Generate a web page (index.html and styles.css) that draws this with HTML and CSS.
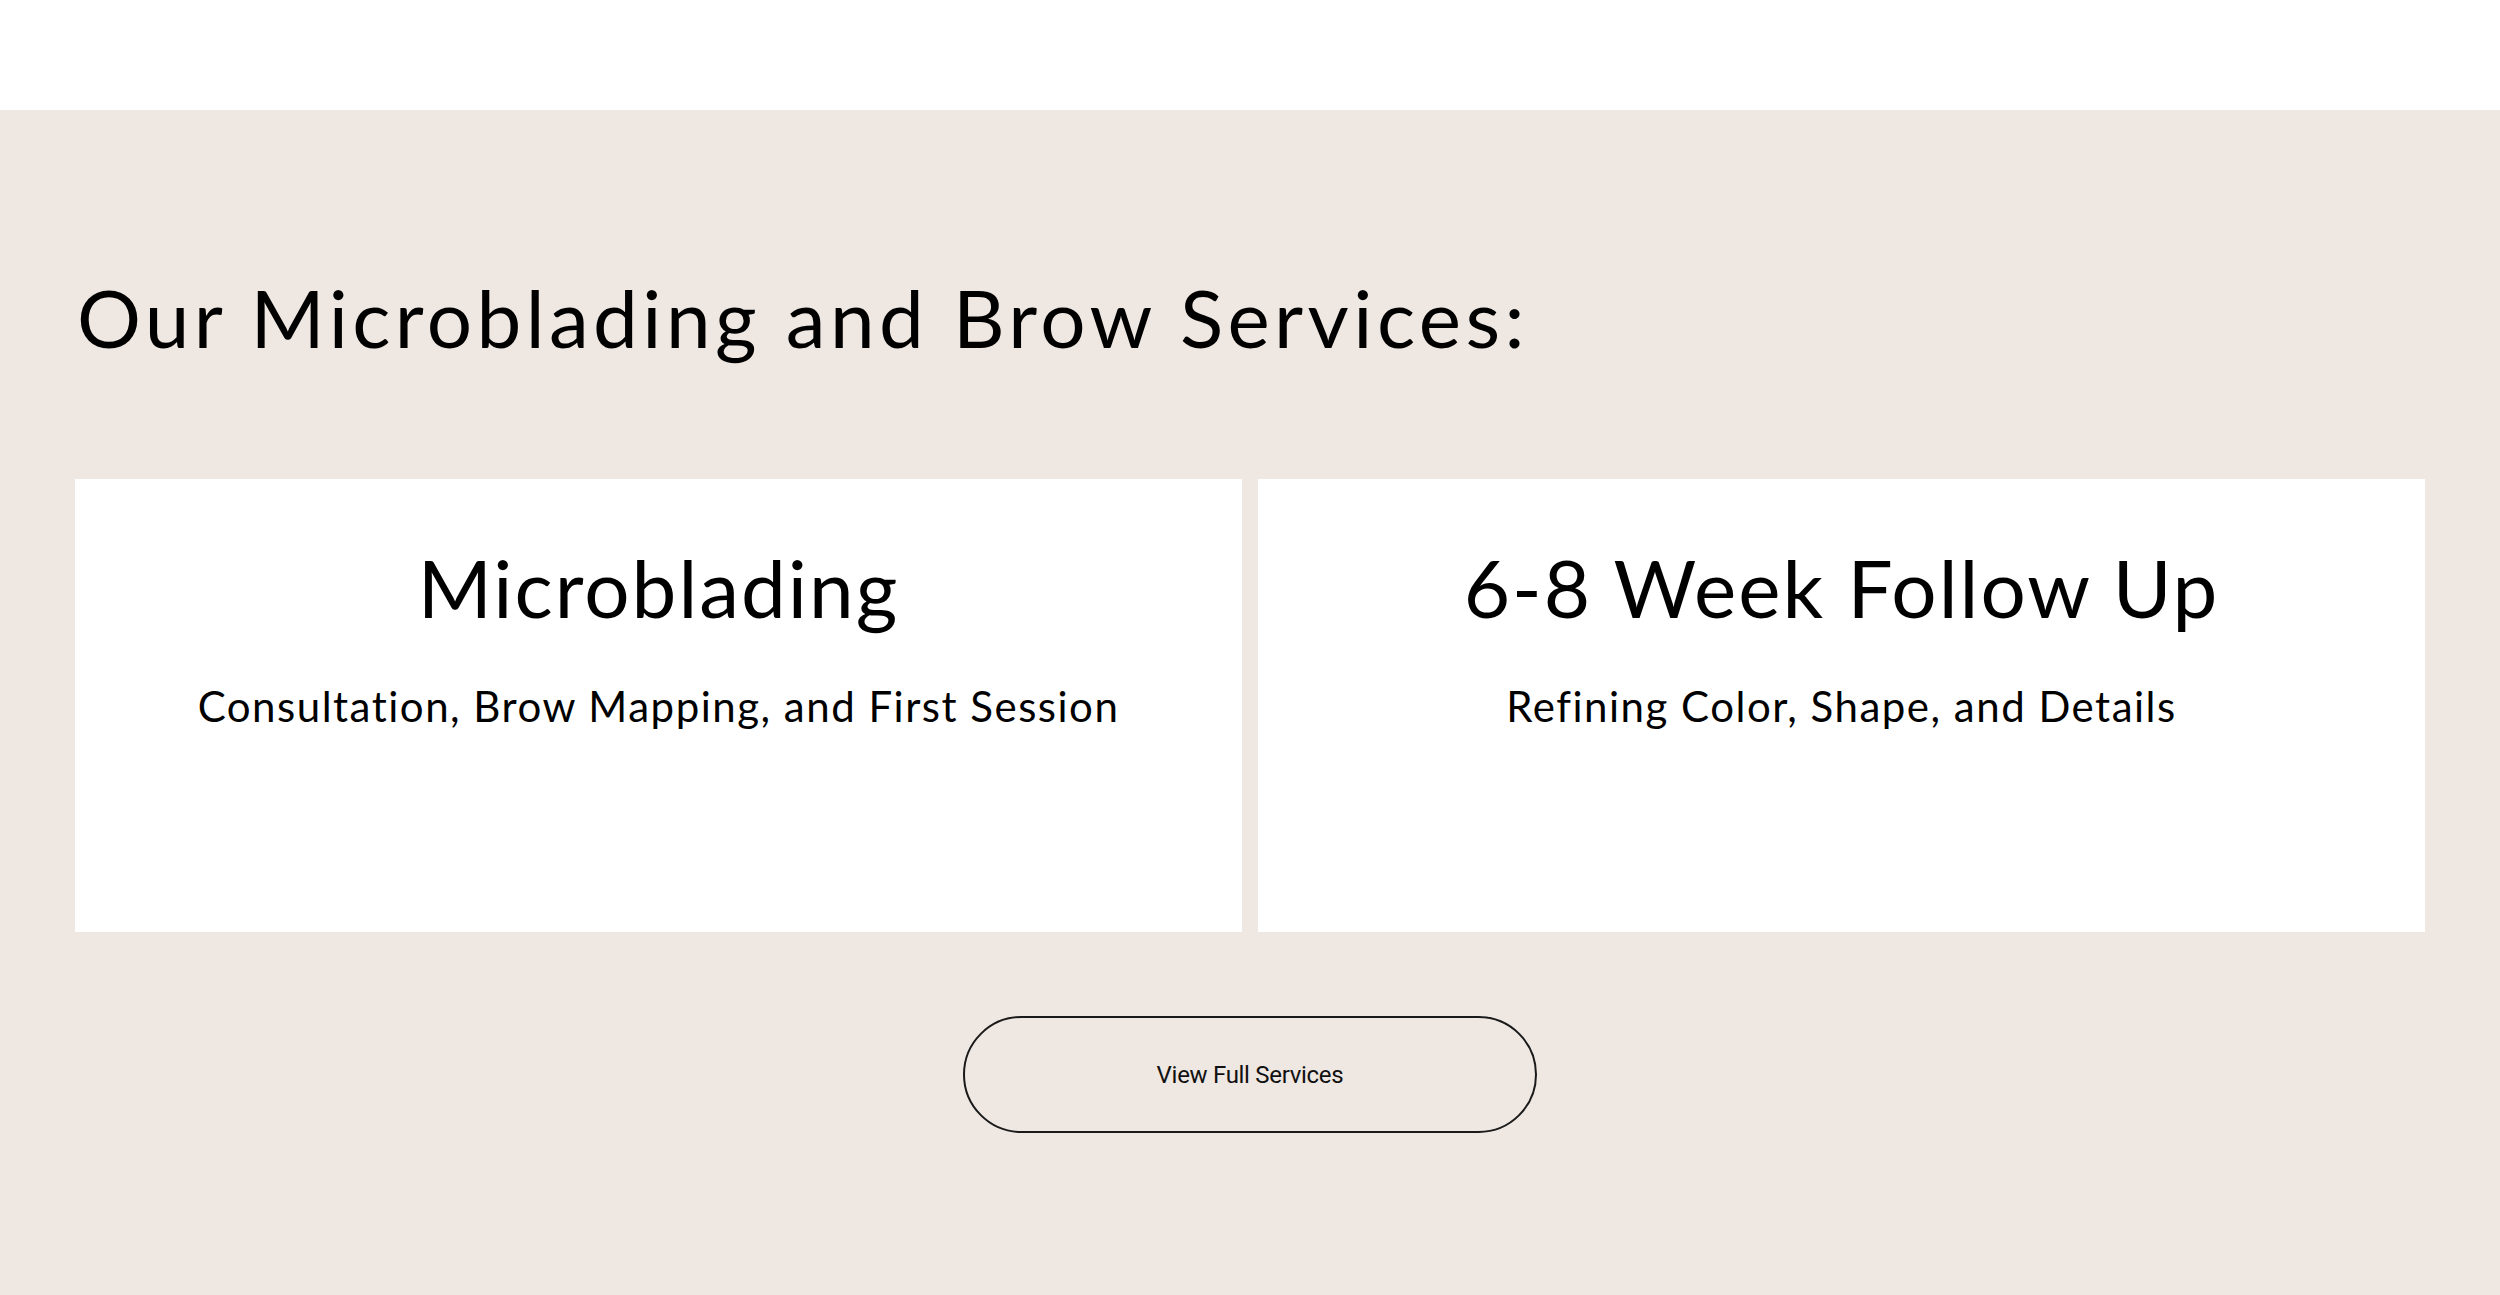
FILE: index.html
```html
<!DOCTYPE html>
<html lang="en">
<head>
    <meta charset="UTF-8">
    <meta name="viewport" content="width=device-width, initial-scale=1.0">
    <title>Microblading and Brow Services</title>
    <link rel="stylesheet" href="styles.css">
</head>
<body>
    <header class="top-bar"></header>

    <section class="services">
        <h2 class="services-title">Our Microblading and Brow Services:</h2>

        <div class="service-grid">
            <div class="service-card">
                <h3>Microblading</h3>
                <p>Consultation, Brow Mapping, and First Session</p>
            </div>
            <div class="service-card">
                <h3>6-8 Week Follow Up</h3>
                <p>Refining Color, Shape, and Details</p>
            </div>
        </div>

        <div class="actions">
            <a class="outline-btn" href="#">View Full Services</a>
        </div>
    </section>
</body>
</html>
```

FILE: styles.css
```css
body {
    margin: 0;
    padding: 0;
    font-family: 'Lato', 'Open Sans', sans-serif;
    color: #000;
    background: #eee7e2;
}
.top-bar {
    height: 110px;
    background: #fff;
}
.services {
    background: #eee7e2;
    padding: 167px 75px 162px;
}
.services-title {
    margin: 0 0 122px 2px;
    font-size: 80px;
    font-weight: 400;
    line-height: 80px;
    letter-spacing: 4.4px;
}
.service-grid {
    display: grid;
    grid-template-columns: 1fr 1fr;
    gap: 16px;
}
.service-card {
    background: #fff;
    height: 453px;
    box-sizing: border-box;
    padding-top: 68px;
    text-align: center;
}
.service-card h3 {
    margin: 0;
    font-size: 80px;
    font-weight: 400;
    line-height: 80px;
    letter-spacing: 2px;
}
.service-card p {
    margin: 58px 0 0;
    font-size: 42px;
    line-height: 42px;
    letter-spacing: 1.5px;
}
.actions {
    display: flex;
    justify-content: center;
    margin-top: 84px;
}
.outline-btn {
    display: flex;
    align-items: center;
    justify-content: center;
    width: 574px;
    height: 117px;
    box-sizing: border-box;
    border: 2px solid #1a1a1a;
    border-radius: 59px;
    font-family: 'Roboto', 'Liberation Sans', sans-serif;
    font-size: 24px;
    color: #111;
    text-decoration: none;
    letter-spacing: -0.3px;
}
```
